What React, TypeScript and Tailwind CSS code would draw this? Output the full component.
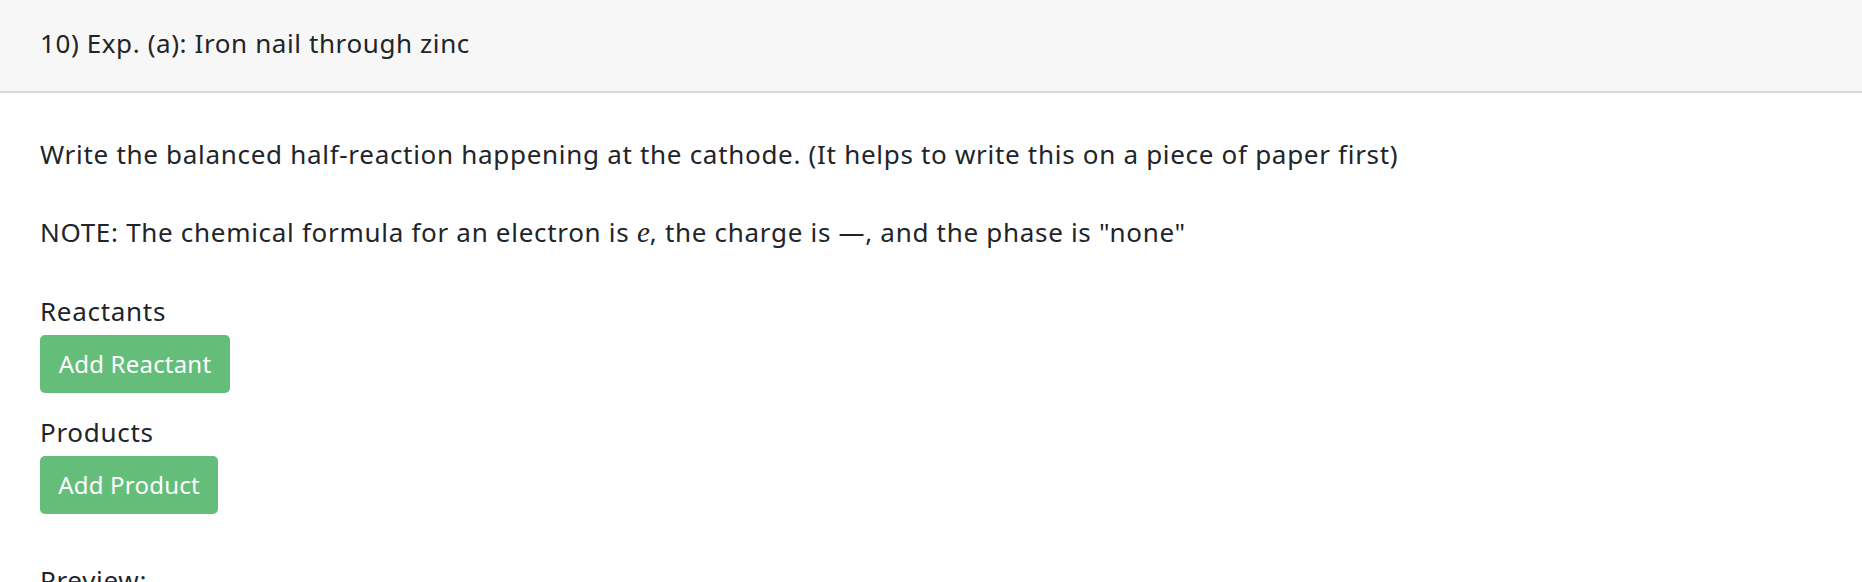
import React from "react";

function AddButton({ label, width }: { label: string; width: string }) {
    return (
        <button
            type="button"
            className={`${width} h-[58px] rounded-[5px] bg-[#64be7a] text-center text-[24px] leading-none tracking-[0.2px] text-white`}
        >
            {label}
        </button>
    );
}

export default function App() {
    return (
        <div className="min-h-[582px] bg-white text-[#212529] font-['Noto_Sans','Open_Sans',sans-serif]">
            <div className="flex h-[93px] items-start border-b-2 border-[#d8d8d8] bg-[#f7f7f7] px-[40px] pt-[24px] text-[26px] leading-[39px] tracking-[0.6px]">
                10) Exp. (a): Iron nail through zinc
            </div>

            <div className="flex flex-col items-start px-[40px] pt-[42px] text-[26px] leading-[39px] tracking-[0.7px]">
                <p className="mb-[39px]">
                    Write the balanced half-reaction happening at the cathode. (It helps to write this on a piece of paper first)
                </p>
                <p className="mb-[40px]">
                    NOTE: The chemical formula for an electron is{" "}
                    <span className="font-['Liberation_Serif',serif] text-[29px] italic tracking-normal">e</span>, the charge is —,
                    and the phase is "none"
                </p>

                <div className="mb-[4px]">Reactants</div>
                <AddButton label="Add Reactant" width="w-[190px]" />

                <div className="mb-[4px] mt-[20px]">Products</div>
                <AddButton label="Add Product" width="w-[178px]" />

                <div className="mt-[47px]">Preview:</div>
            </div>
        </div>
    );
}
